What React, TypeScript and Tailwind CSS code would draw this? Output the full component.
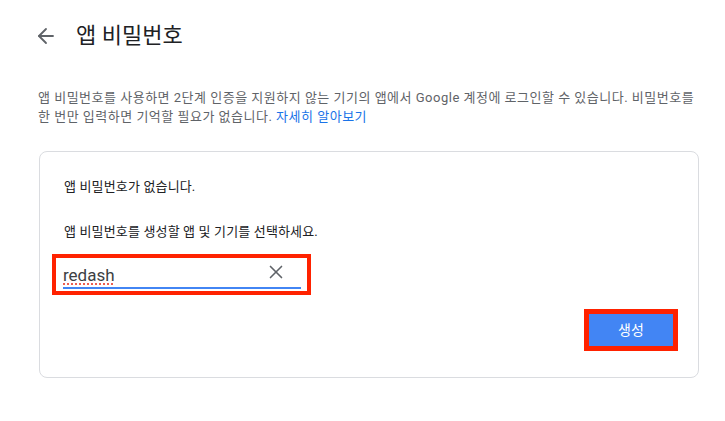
import { ArrowLeft, X } from 'lucide-react';

const font = { fontFamily: 'Roboto, "Noto Sans CJK KR", sans-serif' };

export default function App() {
  return (
    <div className="w-[725px] h-[421px] bg-white text-[#202124]" style={font}>
      <div className="flex items-center pl-[34px] pt-[22px] h-[50px]">
        <ArrowLeft className="h-[24px] w-[24px] text-[#5f6368]" strokeWidth={1.8} />
        <h1 className="ml-[18px] text-[22px] leading-[28px] font-normal">앱 비밀번호</h1>
      </div>

      <p className="mt-[38px] ml-[38px] w-[680px] text-[13px] leading-[19px] tracking-[0.5px] text-[#5f6368] whitespace-nowrap">
        앱 비밀번호를 사용하면 2단계 인증을 지원하지 않는 기기의 앱에서 Google 계정에 로그인할 수 있습니다. 비밀번호를
        <br />
        한 번만 입력하면 기억할 필요가 없습니다. <a className="text-[#1a73e8]">자세히 알아보기</a>
      </p>

      <div className="mt-[25px] ml-[39px] w-[660px] h-[227px] rounded-[8px] border border-[#dadce0] flex flex-col">
        <div className="pl-[24px] pt-[25px] text-[13px] leading-[19px] tracking-[0.15px]">
          <p>앱 비밀번호가 없습니다.</p>
          <p className="mt-[26px]">앱 비밀번호를 생성할 앱 및 기기를 선택하세요.</p>
        </div>
        <div className="mt-[13px] ml-[12px] w-[259px] h-[41px] border-[4px] border-[#ff2200] flex items-center pl-[7px] pr-[6px]">
          <div className="flex-1 h-full flex items-end pb-[2px]">
            <div className="flex-1 flex items-center h-[27px] border-b-2 border-[#4285f4] relative">
              <span className="text-[17px] leading-[20px] text-[#3c4043] underline decoration-dotted decoration-[#ea4335] underline-offset-[3px]">redash</span>
              <X className="absolute right-[14px] top-[-1px] h-[22px] w-[22px] text-[#5f6368]" strokeWidth={1.8} />
            </div>
          </div>
        </div>
        <div className="flex justify-end pr-[20px] mt-[14px]">
          <div className="border-[5px] border-[#ff2200]">
            <button className="w-[84px] h-[32px] bg-[#4285f4] text-white text-[14px]">생성</button>
          </div>
        </div>
      </div>
    </div>
  );
}
